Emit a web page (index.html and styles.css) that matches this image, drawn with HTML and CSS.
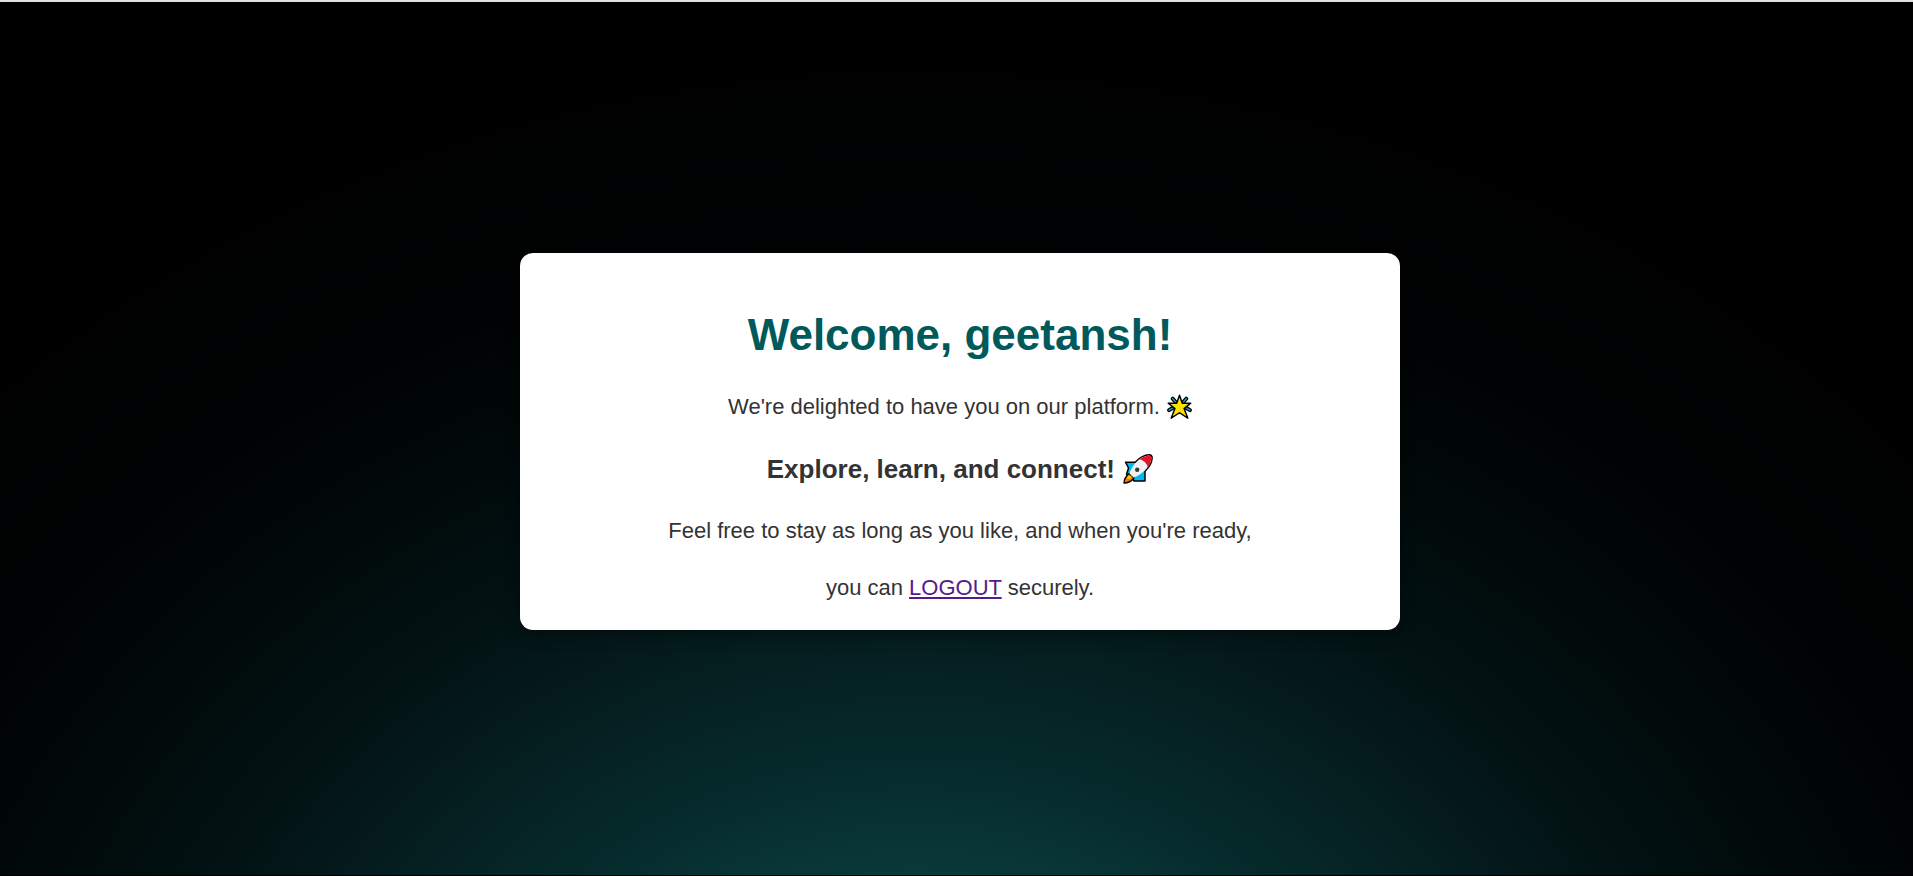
FILE: index.html
```html
<!DOCTYPE html>
<html lang="en">
<head>
<meta charset="utf-8">
<title>Welcome</title>
<link rel="stylesheet" href="styles.css">
</head>
<body>
<main class="card">
  <h1 class="title">Welcome, geetansh!</h1>
  <p class="text">We're delighted to have you on our platform.
    <svg class="emoji" viewBox="0 0 24 24" role="img" aria-label="glowing star">
      <g stroke-linecap="round"><path d="M5.500 4.500l3 3.500M18.500 4.500l-3 3.500M2 15.500L6 13M22 15.500L18 13" stroke="#000" stroke-width="3.800"/><path d="M5.500 4.500l3 3.500M18.500 4.500l-3 3.500M2 15.500L6 13M22 15.500L18 13" stroke="#1f8fbd" stroke-width="1.500"/></g>
      <path d="M12 1.200l2.700 7.600h8.100l-6.400 5.200 3.600 9.200L12 18l-8 5.200L7.600 14 1.200 8.800h8.100z" fill="#ffe100" stroke="#000" stroke-width="1.400" stroke-linejoin="round"/>
    </svg>
  </p>
  <h2 class="subtitle">Explore, learn, and connect!
    <svg class="emoji emoji-large" viewBox="0 0 30 30" role="img" aria-label="rocket">
      <path d="M2.500 8.200H14L22 15V27H11L8 22 3.500 20.500 5.500 14z" fill="#00b9f2" stroke="#000" stroke-width="1.500" stroke-linejoin="round"/>
      <path d="M6 19.500Q1 24 1 29Q7 29 11 24z" fill="#f7740b" stroke="#000" stroke-width="1.400" stroke-linejoin="round"/>
      <path d="M6 21Q4 23 4 25Q8 25 9 23z" fill="#ffc000"/>
      <path d="M12.500 8.200Q19.500 1.200 26 1Q29 .9 29 4Q28.600 10.800 22 17" fill="none" stroke="#000" stroke-width="1.800"/>
      <path d="M6.500 19.500C8 14.500 15 2 26 1.500Q28.500 1.300 28.500 4C28 13 17.500 21.500 10.500 23.500z" fill="#f1f1f1"/>
      <path d="M16.500 5Q21.500 1.700 26 1.600Q28.400 1.600 28.400 4Q28 8.500 24.800 13.400Q23.500 7.500 16.500 5z" fill="#e81224"/>
      <circle cx="14.200" cy="15.800" r="2.200" fill="#383838"/>
    </svg>
  </h2>
  <p class="text">Feel free to stay as long as you like, and when you're ready,</p>
  <p class="text">you can <a class="link" href="#logout">LOGOUT</a> securely.</p>
</main>
</body>
</html>
```

FILE: styles.css
```css
* {
  box-sizing: border-box;
}

body {
  margin: 0;
  min-height: 100vh;
  padding: 6px 0 0 7px;
  display: flex;
  align-items: center;
  justify-content: center;
  border-top: 2px solid #dfe1e2;
  border-bottom: 1px solid #000;
  background: #000 radial-gradient(1376px 1170px at 48% calc(100% + 300px), #0a3a3a 25%, #062b2c 35%, #051f21 45%, #04181a 51%, #021112 58%, #010808 71%, #000304 79%, #000101 92%, #000 100%) no-repeat;
  font-family: "Liberation Sans", Arial, sans-serif;
  color: #333;
}

.card {
  width: 880px;
  max-width: 100%;
  padding: 54px 24px 29px;
  display: flex;
  flex-direction: column;
  gap: 31px;
  border-radius: 13px;
  background: #fff;
  box-shadow: 0 4px 16px rgba(0, 0, 0, 0.4);
  text-align: center;
}

.title,
.subtitle,
.text {
  margin: 0;
}

.title {
  font-size: 44px;
  line-height: 56px;
  color: #005a5b;
}

.subtitle {
  font-size: 26px;
  line-height: 36px;
}

.text {
  font-size: 22px;
  line-height: 26px;
}

.link {
  color: #551a8b;
}

.emoji {
  width: 25px;
  height: 25px;
  margin-left: 1px;
  vertical-align: -5px;
}

.emoji-large {
  width: 30px;
  height: 30px;
  vertical-align: -6px;
}
```
